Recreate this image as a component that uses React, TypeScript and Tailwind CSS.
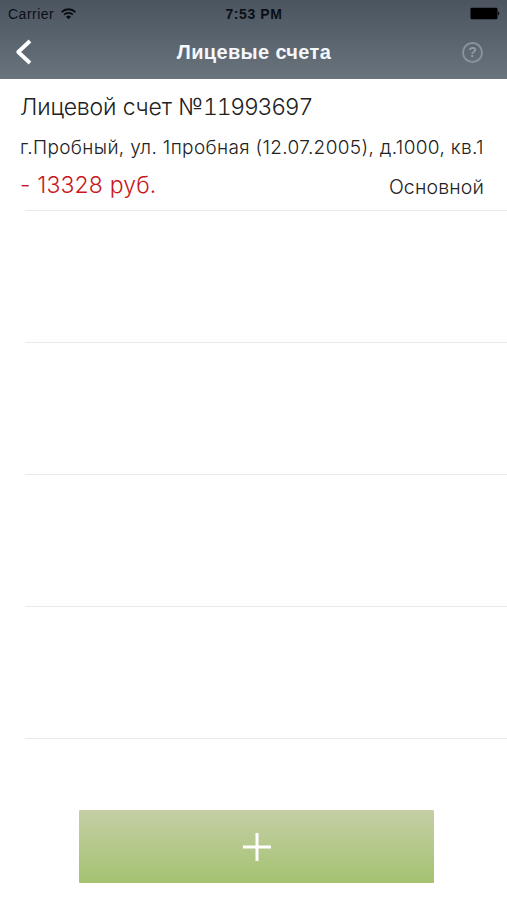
interface Account {
  number: string;
  address: string;
  balance: string;
  kind: string;
}

const ACCOUNT: Account = {
  number: "11993697",
  address: "г.Пробный, ул. 1пробная (12.07.2005), д.1000, кв.1",
  balance: "- 13328 руб.",
  kind: "Основной",
};

const EMPTY_ROWS = [1, 2, 3, 4];

function WifiIcon() {
  return (
    <svg width="15" height="12" viewBox="0 0 15 12" fill="none" aria-hidden="true">
      <path d="M.6 4.1a9.8 9.8 0 0 1 13.8 0" stroke="#080b10" strokeWidth="1.8" />
      <path d="M3.1 6.7a6.2 6.2 0 0 1 8.8 0" stroke="#080b10" strokeWidth="1.7" />
      <path d="M7.5 11.2 5 8.7a3.6 3.6 0 0 1 5 0Z" fill="#080b10" />
    </svg>
  );
}

function BatteryIcon() {
  return (
    <svg width="30" height="13" viewBox="0 0 30 13" fill="#000" aria-hidden="true">
      <rect x="0.5" y="0.7" width="27" height="11.6" rx="1.2" />
      <path d="M28.2 4.5c1.6.5 1.6 3.5 0 4Z" />
    </svg>
  );
}

function BackIcon() {
  return (
    <svg width="18" height="28" viewBox="0 0 18 28" fill="none" aria-hidden="true">
      <path
        d="M16 3 4.2 14 16 25"
        stroke="#fff"
        strokeWidth="3.8"
        strokeLinejoin="round"
      />
    </svg>
  );
}

function StatusBar() {
  return (
    <div className="grid h-[27px] grid-cols-3 items-center pr-[7px] pl-2 text-[14px] text-[#0b0f15]">
      <div className="flex items-center gap-[7px]">
        <span className="pt-px tracking-[0.5px]">Carrier</span>
        <WifiIcon />
      </div>
      <span className="pt-px text-center text-[14px] font-bold tracking-[0.6px]">7:53 PM</span>
      <div className="flex justify-end">
        <BatteryIcon />
      </div>
    </div>
  );
}

function NavBar() {
  return (
    <div className="flex h-[50px] items-center justify-between pr-[24px] pl-[14px]">
      <button type="button" aria-label="Назад" className="w-8">
        <BackIcon />
      </button>
      <h1 className="text-[20px] font-bold tracking-[0.35px] whitespace-nowrap text-[#f4f7fb]">
        Лицевые счета
      </h1>
      <button
        type="button"
        className="flex size-[21px] items-center justify-center rounded-full border-2 border-[#89929b] text-[14px] font-bold text-[#929ba3]"
      >
        ?
      </button>
    </div>
  );
}

function AccountRow({ account }: { account: Account }) {
  return (
    <li className="flex h-[132px] flex-col pr-[23px] pl-[20px] font-['Inter',sans-serif] font-light whitespace-nowrap text-[#222]">
      <p className="mt-[13px] text-[23px] leading-[30px] tracking-[-0.15px]">
        Лицевой счет №
        <span className="tracking-[-1.25px] tabular-nums">{account.number}</span>
      </p>
      <p className="mt-[13px] text-[19px] leading-[26px] tracking-[0.35px]">{account.address}</p>
      <div className="mt-[9px] flex items-center justify-between">
        <span className="text-[23px] leading-[30px] tracking-[0.15px] text-[#c9171e]">
          {account.balance}
        </span>
        <span className="pt-1 text-[19.5px] leading-[26px] tracking-[0.15px]">{account.kind}</span>
      </div>
    </li>
  );
}

function Separator() {
  return <div className="-mt-px ml-[25px] h-px bg-[#e9e9e9]" />;
}

export default function App() {
  return (
    <main className="flex h-[900px] w-[507px] flex-col overflow-hidden bg-white font-['Liberation_Sans',Arial,sans-serif]">
      <header className="h-[79px] bg-linear-to-b from-[#4b545f] to-[#69747d]">
        <StatusBar />
        <NavBar />
      </header>
      <ul>
        <AccountRow account={ACCOUNT} />
        <li aria-hidden="true">
          <Separator />
        </li>
        {EMPTY_ROWS.map((row) => (
          <li key={row}>
            <div className="h-[132px]" />
            <Separator />
          </li>
        ))}
      </ul>
      <button
        type="button"
        aria-label="Добавить"
        className="mt-[71px] ml-[79px] flex h-[73px] w-[355px] items-center justify-center rounded-[1px] bg-linear-to-b from-[#c4cfa5] to-[#a5c270]"
      >
        <svg width="28" height="28" viewBox="0 0 28 28" stroke="#fff" strokeWidth="3" aria-hidden="true">
          <path d="M14 0v28M0 14h28" />
        </svg>
      </button>
    </main>
  );
}
